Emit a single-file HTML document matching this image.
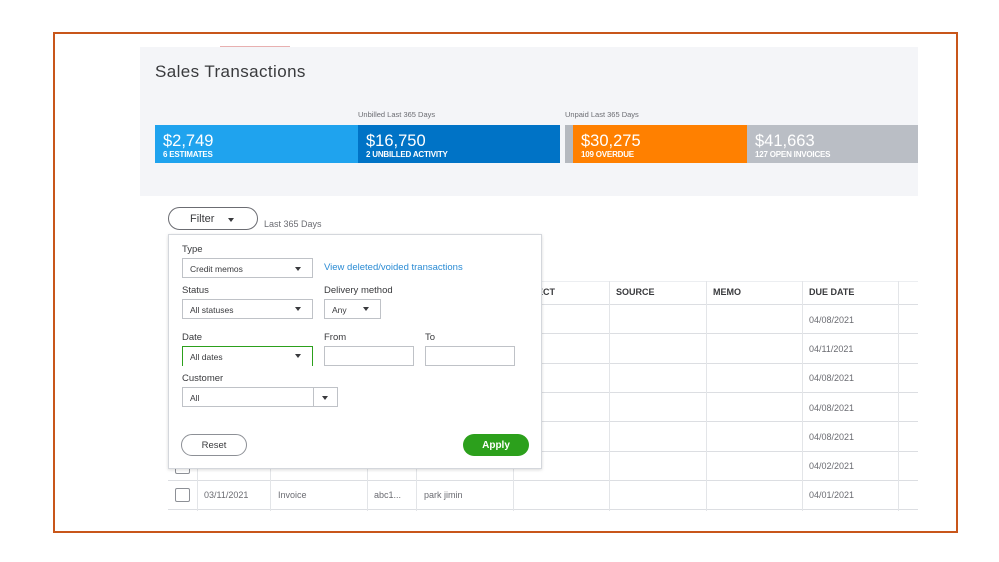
<!DOCTYPE html>
<html><head><style>
*{margin:0;padding:0;box-sizing:border-box}
body{width:999px;height:562px;background:#fff;position:relative;overflow:hidden;font-family:"Liberation Sans",sans-serif;color:#393a3d}
.a{position:absolute}
.t{color:#fff}
.big{font-size:16.5px;position:absolute;left:8px;top:7px}
.sm{font-size:8px;font-weight:bold;position:absolute;left:8px;top:25px;letter-spacing:-0.2px}
.vl{position:absolute;top:281px;height:230px;width:1px;background:#e3e5e8}
.hl{position:absolute;left:168px;width:750px;height:1px;background:#dcdee2}
.th{position:absolute;top:287px;font-size:9px;font-weight:bold;color:#393a3d}
.dd{position:absolute;left:809px;font-size:9px;color:#6b6c72}
.lbl{position:absolute;font-size:9.5px;color:#393a3d}
.box{position:absolute;border:1px solid #bfc2c7;background:#fff;font-size:8.5px;color:#393a3d;height:20px;padding:5px 7px}
.car{position:absolute;width:0;height:0;border-left:3.5px solid transparent;border-right:3.5px solid transparent;border-top:4px solid #393a3d}
</style></head><body>
<div class="a" style="left:53px;top:32px;width:905px;height:501px;border:2px solid #c8561a"></div>
<div class="a" style="left:140px;top:47px;width:778px;height:149px;background:#f4f5f8"></div>
<div class="a" style="left:220px;top:46px;width:70px;height:1px;background:#e8b0b0"></div>
<div class="a" style="left:155px;top:62px;font-size:17px;letter-spacing:0.4px;color:#393a3d">Sales Transactions</div>
<div class="a" style="left:358px;top:110px;font-size:7.5px;color:#6b6c72">Unbilled Last 365 Days</div>
<div class="a" style="left:565px;top:110px;font-size:7.5px;color:#6b6c72">Unpaid Last 365 Days</div>
<div class="a t" style="left:155px;top:125px;width:203px;height:38px;background:#1fa3ee"><div class="big">$2,749</div><div class="sm">6 ESTIMATES</div></div>
<div class="a t" style="left:358px;top:125px;width:202px;height:38px;background:#0073c6"><div class="big">$16,750</div><div class="sm">2 UNBILLED ACTIVITY</div></div>
<div class="a" style="left:565px;top:125px;width:8px;height:38px;background:#b5b9bf"></div>
<div class="a t" style="left:573px;top:125px;width:174px;height:38px;background:#ff8000"><div class="big">$30,275</div><div class="sm">109 OVERDUE</div></div>
<div class="a t" style="left:747px;top:125px;width:171px;height:38px;background:#babec5"><div class="big">$41,663</div><div class="sm">127 OPEN INVOICES</div></div>

<div class="a" style="left:168px;top:207px;width:90px;height:23px;border:1px solid #6b6c72;border-radius:12px"></div>
<div class="a" style="left:190px;top:213px;font-size:11px">Filter</div>
<div class="car" style="left:228px;top:218px"></div>
<div class="a" style="left:264px;top:219px;font-size:9px;color:#6b6c72">Last 365 Days</div>

<div class="hl" style="top:281px;background:#eceef1"></div>
<div class="hl" style="top:304px"></div><div class="hl" style="top:333px"></div><div class="hl" style="top:363px"></div><div class="hl" style="top:392px"></div><div class="hl" style="top:421px"></div><div class="hl" style="top:451px"></div><div class="hl" style="top:480px"></div><div class="hl" style="top:509px"></div>
<div class="vl" style="left:197px"></div><div class="vl" style="left:270px"></div><div class="vl" style="left:367px"></div><div class="vl" style="left:416px"></div><div class="vl" style="left:513px"></div><div class="vl" style="left:609px"></div><div class="vl" style="left:706px"></div><div class="vl" style="left:802px"></div><div class="vl" style="left:898px"></div>
<div class="th" style="left:532px">JECT</div><div class="th" style="left:616px">SOURCE</div><div class="th" style="left:713px">MEMO</div><div class="th" style="left:809px">DUE DATE</div>
<div class="dd" style="top:315px">04/08/2021</div><div class="dd" style="top:344px">04/11/2021</div><div class="dd" style="top:373px">04/08/2021</div><div class="dd" style="top:403px">04/08/2021</div><div class="dd" style="top:432px">04/08/2021</div><div class="dd" style="top:461px">04/02/2021</div><div class="dd" style="top:490px">04/01/2021</div>
<div class="a" style="left:175px;top:488px;width:15px;height:14px;border:1px solid #8d9096;border-radius:2px"></div>
<div class="a" style="left:175px;top:460px;width:15px;height:14px;border:1px solid #8d9096;border-radius:2px"></div>
<div class="a" style="left:204px;top:490px;font-size:9px;color:#6b6c72">03/11/2021</div>
<div class="a" style="left:278px;top:490px;font-size:9px;color:#6b6c72">Invoice</div>
<div class="a" style="left:374px;top:490px;font-size:9px;color:#6b6c72">abc1...</div>
<div class="a" style="left:424px;top:490px;font-size:9px;color:#6b6c72">park jimin</div>

<div class="a" style="left:168px;top:234px;width:374px;height:235px;background:#fff;border:1px solid #d4d7dc;box-shadow:0 1px 3px rgba(0,0,0,.15)"></div>
<div class="lbl" style="left:182px;top:244px">Type</div>
<div class="box" style="left:182px;top:258px;width:131px">Credit memos</div><div class="car" style="left:295px;top:267px"></div>
<div class="a" style="left:324px;top:262px;font-size:9.5px;color:#2a8bd4">View deleted/voided transactions</div>
<div class="lbl" style="left:182px;top:285px">Status</div>
<div class="lbl" style="left:324px;top:285px">Delivery method</div>
<div class="box" style="left:182px;top:299px;width:131px">All statuses</div><div class="car" style="left:295px;top:307px"></div>
<div class="box" style="left:324px;top:299px;width:57px">Any</div><div class="car" style="left:363px;top:307px"></div>
<div class="lbl" style="left:182px;top:332px">Date</div><div class="lbl" style="left:324px;top:332px">From</div><div class="lbl" style="left:425px;top:332px">To</div>
<div class="box" style="left:182px;top:346px;width:131px;border-color:#2ca01c;border-bottom:none">All dates</div><div class="car" style="left:295px;top:354px"></div>
<div class="box" style="left:324px;top:346px;width:90px"></div><div class="box" style="left:425px;top:346px;width:90px"></div>
<div class="lbl" style="left:182px;top:373px">Customer</div>
<div class="box" style="left:182px;top:387px;width:156px">All</div>
<div class="a" style="left:313px;top:387px;width:1px;height:20px;background:#bfc2c7"></div><div class="car" style="left:322px;top:396px"></div>
<div class="a" style="left:181px;top:434px;width:66px;height:22px;border:1px solid #8d9096;border-radius:11px;font-size:9.5px;text-align:center;line-height:21px">Reset</div>
<div class="a" style="left:463px;top:434px;width:66px;height:22px;background:#2ca01c;border-radius:11px;font-size:10px;font-weight:bold;color:#fff;text-align:center;line-height:23px">Apply</div>
</body></html>
